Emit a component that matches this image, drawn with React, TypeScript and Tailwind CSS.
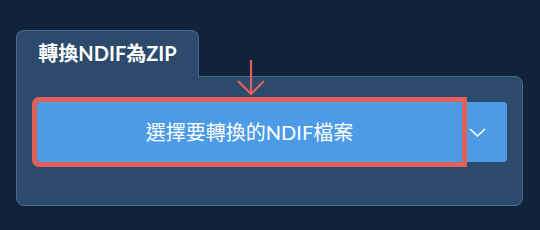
const App = () => {
  return (
    <div className="min-h-[230px] bg-[#11233a] pt-[30px] pl-4 pr-[17px] font-['Lato','Noto_Sans_CJK_TC',sans-serif]">
      {/* 分頁標籤 */}
      <div className="relative z-10 -mb-px flex h-[47px] w-[183px] items-center justify-center rounded-t-lg border border-b-0 border-[#4b6a8d] bg-[#2c4a6b] pb-[2px]">
        <span className="text-[20px] font-bold text-white">轉換NDIF為ZIP</span>
      </div>

      {/* 主面板 */}
      <div className="relative rounded-b-lg rounded-tr-lg border border-[#4b6a8d] bg-[#2c4a6b] pt-[25px] pb-[43px] pl-5 pr-[15px]">
        <div className="flex h-[60px]">
          <button className="relative z-10 flex flex-1 items-center justify-center rounded-l-[2px] bg-[#4c9be6] text-[20px] text-white outline-[5px] outline-[#e0605a] outline-solid">
            選擇要轉換的NDIF檔案
          </button>
          <button className="flex w-[45px] items-center rounded-r bg-[#4c9be6] pl-[7px]">
            <svg width="17" height="9" viewBox="0 0 17 9" fill="none">
              <path d="M1 1L8.5 8L16 1" stroke="white" strokeWidth="1.6" />
            </svg>
          </button>
        </div>

        {/* 提示箭頭 */}
        <svg className="absolute left-[219px] top-[-18px]" width="30" height="37" viewBox="0 0 30 37" fill="none">
          <path d="M15 1V35M2 22L15 35L28 22" stroke="#e0605a" strokeWidth="2.2" />
        </svg>
      </div>
    </div>
  );
};

export default App;
